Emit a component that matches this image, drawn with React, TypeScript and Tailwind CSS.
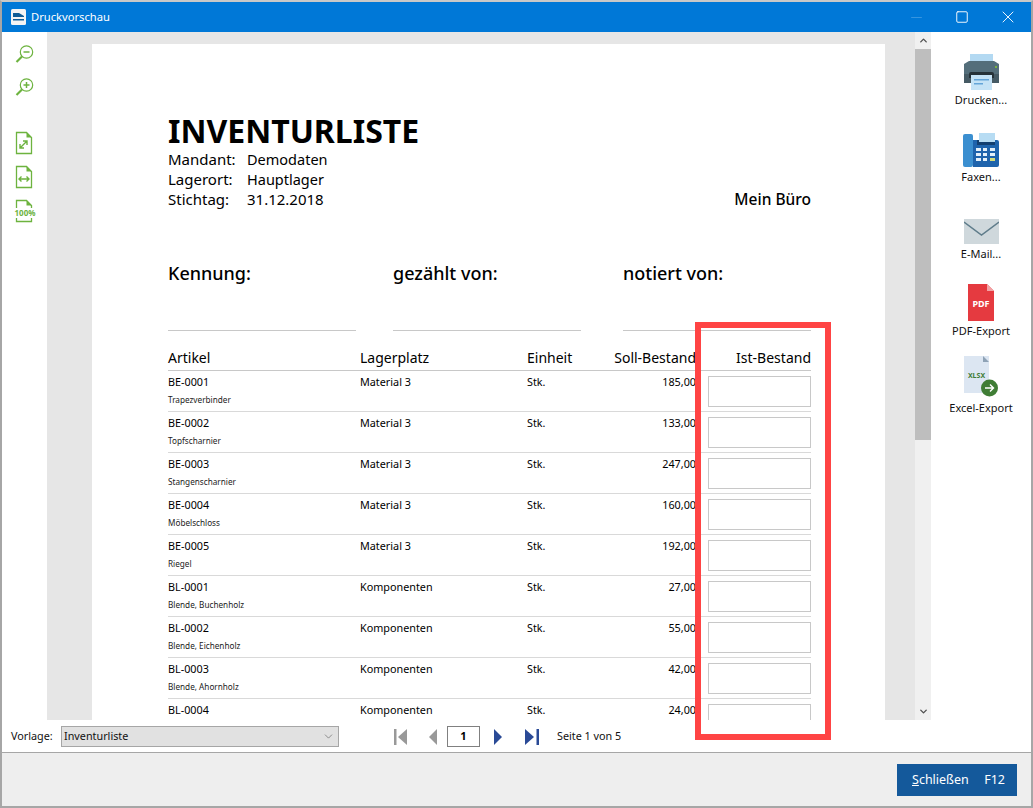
import { ChevronDown, ChevronUp, Minus, Square, X } from "lucide-react";

const font = "font-['Noto_Sans','Open_Sans',sans-serif]";

const rows = [
  ["BE-0001", "Trapezverbinder", "Material 3", "185,00"],
  ["BE-0002", "Topfscharnier", "Material 3", "133,00"],
  ["BE-0003", "Stangenscharnier", "Material 3", "247,00"],
  ["BE-0004", "Möbelschloss", "Material 3", "160,00"],
  ["BE-0005", "Riegel", "Material 3", "192,00"],
  ["BL-0001", "Blende, Buchenholz", "Komponenten", "27,00"],
  ["BL-0002", "Blende, Eichenholz", "Komponenten", "55,00"],
  ["BL-0003", "Blende, Ahornholz", "Komponenten", "42,00"],
  ["BL-0004", "", "Komponenten", "24,00"],
];

function ZoomIcon({ plus }: { plus?: boolean }) {
  return (
    <svg width="20" height="20" viewBox="0 0 20 20" fill="none" stroke="#6db33f">
      <circle cx="11.5" cy="8" r="6.2" strokeWidth="1.2" />
      <path d="M8.5 8h6" strokeWidth="1.5" />
      {plus && <path d="M11.5 5v6" strokeWidth="1.5" />}
      <path d="M7 12.5 1.5 18" strokeWidth="2.2" />
    </svg>
  );
}

function PageIcon({ children }: { children: React.ReactNode }) {
  return (
    <svg width="26" height="24" viewBox="0 0 26 24" fill="none">
      <path d="M4.5 1.5h10l5 5v16h-15z" stroke="#6db33f" strokeWidth="1.3" fill="#fff" />
      <path d="M14.5 1.5v5h5z" fill="#6db33f" />
      {children}
    </svg>
  );
}

function PrinterIcon() {
  return (
    <svg className="shrink-0" width="37" height="36" viewBox="0 0 37 36">
      <path d="M7 0h23v9H7z" fill="#b3d9f2" />
      <path d="M6 7h25l5 3v19H1V10z" fill="#546e7a" />
      <path d="M1 20h35v9H1z" fill="#455a64" />
      <rect x="32" y="12" width="2" height="2" fill="#7cb342" />
      <path d="M6 24V20q0-2 2-2h21q2 0 2 2v4z" fill="#263238" />
      <path d="M8 21h21v15H8z" fill="#c5e3f6" />
      <path d="M11 25h15v1.5H11zM11 29h9v1.5h-9z" fill="#64a5d8" />
    </svg>
  );
}

function FaxIcon() {
  return (
    <svg className="shrink-0" width="36" height="34" viewBox="0 0 36 34">
      <rect x="0" y="1" width="10" height="33" rx="2" fill="#3b8fd0" />
      <path d="M10 7h24q2 0 2 2v23q0 2-2 2H10z" fill="#1e63ac" />
      <path d="M14 7h18v5H14z" fill="#123f70" />
      <path d="M16 0h16v9H16z" fill="#b7dcf3" />
      <g fill="#e3f0fa">
        <rect x="13" y="15" width="5" height="3" />
        <rect x="20" y="15" width="4" height="3" />
        <rect x="27" y="15" width="5" height="3" />
        <rect x="13" y="20" width="5" height="3" />
        <rect x="20" y="20" width="4" height="3" />
        <rect x="27" y="20" width="5" height="3" />
        <rect x="13" y="25" width="5" height="3" />
        <rect x="20" y="25" width="4" height="3" />
      </g>
      <rect x="27" y="25" width="5" height="3" fill="#d5dd7a" />
    </svg>
  );
}

function MailIcon() {
  return (
    <svg className="shrink-0" width="35" height="25" viewBox="0 0 35 25">
      <path d="M0 0h35v25H0z" fill="#cfd8dc" />
      <path d="M0 3 17.5 16 35 3" fill="none" stroke="#607d8b" strokeWidth="1.5" />
    </svg>
  );
}

function PdfIcon() {
  return (
    <svg className="shrink-0" width="26" height="37" viewBox="0 0 26 37">
      <path d="M0 0h19l7 7v30H0z" fill="#e53a40" />
      <path d="M19 0l7 7h-7z" fill="#f2a3a6" />
      <text x="13" y="23" textAnchor="middle" fontSize="9" fontWeight="700" fill="#fff" fontFamily="Noto Sans">PDF</text>
    </svg>
  );
}

function XlsxIcon() {
  return (
    <svg className="shrink-0" width="36" height="42" viewBox="0 0 36 42">
      <path d="M1 0h25v37H1z" fill="#dce6f2" />
      <path d="M20 0l6 6h-6z" fill="#8ea2b5" />
      <text x="13.5" y="22" textAnchor="middle" fontSize="7" fontWeight="700" fill="#3f7d35" fontFamily="Noto Sans">XLSX</text>
      <circle cx="26.5" cy="32" r="8.5" fill="#3f7d35" />
      <path d="M22 32h8M27 28.5l3.5 3.5-3.5 3.5" fill="none" stroke="#fff" strokeWidth="1.4" />
    </svg>
  );
}

function SideAction({ label, icon, className }: { label: string; icon: React.ReactNode; className: string }) {
  return (
    <div className={`flex shrink-0 flex-col items-center justify-end text-[11px] leading-[15px] text-[#111] ${className}`}>
      {icon}
      <span className="mt-[2px]">{label}</span>
    </div>
  );
}

export default function App() {
  return (
    <div className={`relative flex h-[808px] w-[1033px] flex-col overflow-hidden border-x-2 border-t-2 border-b-2 border-x-[#a6a6a6] border-t-[#c8c8c8] border-b-[#a6a6a6] bg-white ${font}`}>
      {/* Title bar */}
      <div className="flex h-[30px] shrink-0 items-center bg-[#0078d7] text-white">
        <svg className="ml-[9px]" width="15" height="16" viewBox="0 0 15 16">
          <rect width="15" height="16" rx="1.5" fill="#f4f4f4" />
          <path d="M2 4h6l5 3v1H2zM2 10h11v1.5H2z" fill="#0f5c96" />
        </svg>
        <span className="ml-[5px] text-[11.2px]">Druckvorschau</span>
        <div className="ml-auto flex items-center">
          <Minus size={17} strokeWidth={1} className="mr-[30px] text-[#4da1e4]" />
          <Square size={14} strokeWidth={1.6} className="mr-[29px]" />
          <X size={20} strokeWidth={1.1} className="mr-[13px]" />
        </div>
      </div>

      <div className="flex h-[688px] shrink-0">
        {/* Zoom tools */}
        <div className="flex w-[45px] shrink-0 flex-col items-center pt-[12px]">
          <ZoomIcon />
          <div className="mt-[13px]"><ZoomIcon plus /></div>
          <div className="mt-[34px]">
            <PageIcon>
              <path d="M8 17l7-7M11 10h4v4M8 13v4h4" stroke="#6db33f" strokeWidth="1.4" />
            </PageIcon>
          </div>
          <div className="mt-[10px]">
            <PageIcon>
              <path d="M7 14h10M9.5 11.5 7 14l2.5 2.5M14.5 11.5 17 14l-2.5 2.5" stroke="#6db33f" strokeWidth="1.4" />
            </PageIcon>
          </div>
          <div className="relative mt-[10px] h-[24px] w-[26px]">
            <PageIcon>{null}</PageIcon>
            <span className="absolute top-[9px] left-[3px] bg-white text-[8px] leading-[10px] font-bold text-[#6db33f]">100%</span>
          </div>
        </div>

        {/* Preview */}
        <div className="h-[688px] w-[868px] shrink-0 bg-[#e6e6e6] pt-[12px] pl-[45px]">
          <div className="h-[676px] w-[793px] overflow-hidden bg-white pt-[68px] pr-[74px] pl-[76px] text-black">
            <h1 className="text-[32px] leading-[37px] font-bold">INVENTURLISTE</h1>
            <div className="flex items-end justify-between text-[14.5px] leading-[20px]">
              <div>
                <div className="flex"><span className="w-[79px] text-[15px]">Mandant:</span>Demodaten</div>
                <div className="flex"><span className="w-[79px] text-[15px]">Lagerort:</span>Hauptlager</div>
                <div className="flex"><span className="w-[79px] text-[15px]">Stichtag:</span><span className="text-[15px]">31.12.2018</span></div>
              </div>
              <span className="text-[15.5px] font-medium">Mein Büro</span>
            </div>

            <div className="mt-[52px] flex text-[18px] leading-[24px] font-medium">
              <div className="w-[225px]">Kennung:</div>
              <div className="w-[230px]">gezählt von:</div>
              <div>notiert von:</div>
            </div>
            <div className="mt-[45px] flex">
              <div className="mr-[37px] h-[1px] w-[188px] bg-[#c8c8c8]" />
              <div className="mr-[42px] h-[1px] w-[188px] bg-[#c8c8c8]" />
              <div className="h-[1px] w-[188px] bg-[#c8c8c8]" />
            </div>

            <div className="mt-[17px] flex h-[23px] items-center border-b border-[#c8c8c8] pb-[3px] text-[14px] leading-[20px]">
              <div className="w-[192px]">Artikel</div>
              <div className="w-[167px]">Lagerplatz</div>
              <div className="w-[60px]">Einheit</div>
              <div className="w-[109px] whitespace-nowrap text-right">Soll-Bestand</div>
              <div className="flex-1 text-right">Ist-Bestand</div>
            </div>

            {rows.map(([code, name, place, qty]) => (
              <div key={code} className="flex h-[41px] border-b border-[#d9d9d9] text-[10.8px]">
                <div className="w-[192px] pt-[3px]">
                  <div className="leading-[16px]">{code}</div>
                  {name && <div className="mt-[2px] text-[8.2px] leading-[16px] text-[#222]">{name}</div>}
                </div>
                <div className="w-[167px] pt-[3px] leading-[16px]">{place}</div>
                <div className="w-[60px] pt-[3px] leading-[16px]">Stk.</div>
                <div className="w-[109px] pt-[3px] text-right leading-[16px]">{qty}</div>
                <div className="mt-[5px] ml-[12px] h-[31px] flex-1 border border-[#c8c8c8]" />
              </div>
            ))}
          </div>
        </div>

        {/* Scrollbar */}
        <div className="flex h-[688px] w-[16px] shrink-0 flex-col bg-[#f0f0f0]">
          <div className="flex h-[17px] items-center justify-center">
            <ChevronUp size={11} strokeWidth={3} className="text-[#505050]" />
          </div>
          <div className="h-[391px] bg-[#bebebe]" />
          <div className="mt-auto flex h-[17px] items-center justify-center">
            <ChevronDown size={11} strokeWidth={3} className="text-[#505050]" />
          </div>
        </div>

        {/* Actions */}
        <div className="flex w-[100px] shrink-0 flex-col">
          <SideAction label="Drucken..." icon={<PrinterIcon />} className="h-[75px]" />
          <SideAction label="Faxen..." icon={<FaxIcon />} className="h-[77px]" />
          <SideAction label="E-Mail..." icon={<MailIcon />} className="h-[77px]" />
          <SideAction label="PDF-Export" icon={<PdfIcon />} className="h-[77px]" />
          <SideAction label="Excel-Export" icon={<XlsxIcon />} className="h-[77px]" />
        </div>
      </div>

      {/* Template and paging */}
      <div className="flex h-[32px] shrink-0 items-center pt-[1px] text-[10.8px] text-[#111]">
        <span className="ml-[9px] w-[50px]">Vorlage:</span>
        <div className="flex h-[21px] w-[278px] items-center justify-between border border-[#a6a6a6] bg-[#e1e1e1] pr-[3px] pl-[2px]">
          Inventurliste
          <ChevronDown size={13} strokeWidth={1} className="text-[#444]" />
        </div>
        <div className="ml-[55px] flex items-center">
          <svg width="14" height="16" viewBox="0 0 14 16"><path d="M0 0h2.5v16H0zM13 0v16L4 8z" fill="#999" /></svg>
          <svg className="ml-[21px]" width="9" height="16" viewBox="0 0 9 16"><path d="M8 0v16L0 8z" fill="#999" /></svg>
          <div className="ml-[9px] flex h-[21px] w-[33px] items-center justify-center border border-[#808080] text-[11px] font-bold text-black">1</div>
          <svg className="ml-[13px]" width="9" height="16" viewBox="0 0 9 16"><path d="M1 0v16l8-8z" fill="#2a4a96" /></svg>
          <svg className="ml-[23px]" width="14" height="16" viewBox="0 0 14 16"><path d="M0 0v16l9-8zM11.5 0H14v16h-2.5z" fill="#2a4a96" /></svg>
          <span className="ml-[18px]">Seite 1 von 5</span>
        </div>
      </div>

      {/* Footer */}
      <div className="flex min-h-0 flex-1 items-start justify-end border-t border-[#a6a6a6] bg-[#eeeeee] pt-[11px] pr-[14px]">
        <div className="flex h-[32px] w-[120px] items-center justify-between bg-[#14599b] pr-[12px] pl-[15px] text-[12.5px] text-white">
          <span><span className="underline">S</span>chließen</span>
          <span>F12</span>
        </div>
      </div>

      {/* Red highlight over the preview */}
      <div className="absolute top-[320px] left-[693px] h-[418px] w-[136px] border-[6px] border-[#ff4444]" />
    </div>
  );
}
